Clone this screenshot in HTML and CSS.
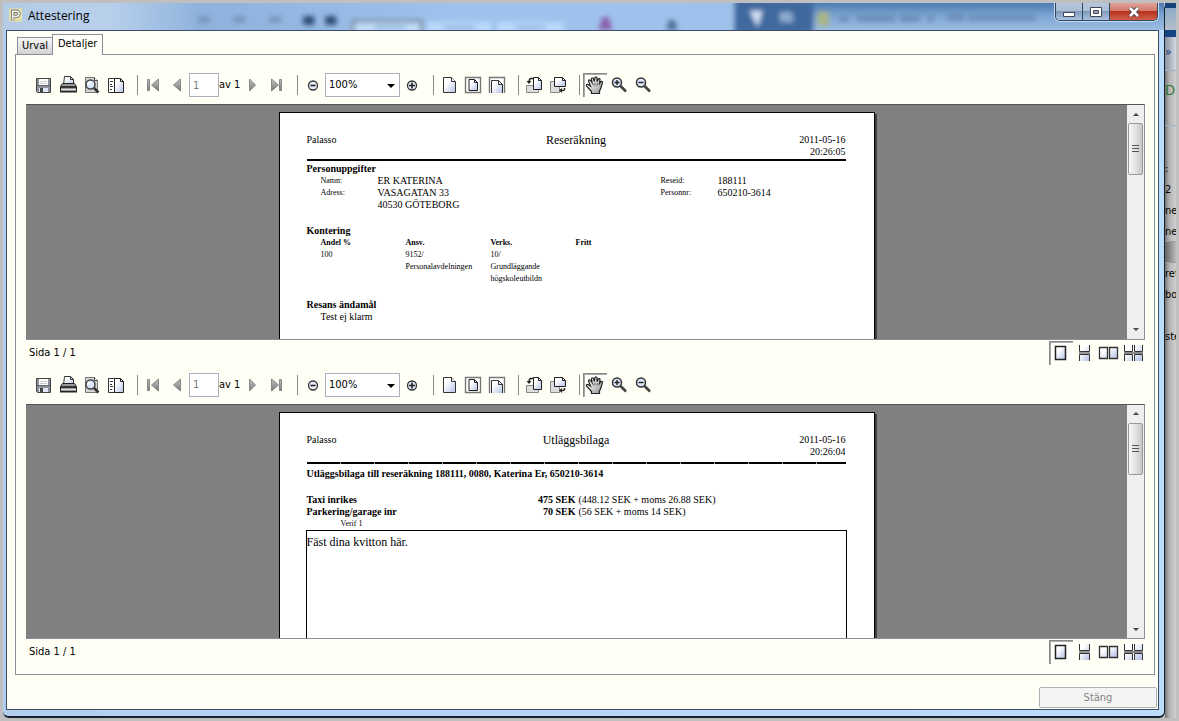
FILE: index.html
```
<!DOCTYPE html>
<html lang="sv">
<head>
<meta charset="utf-8">
<title>Attestering</title>
<link rel="stylesheet" href="styles.css">
</head>
<body>
<svg class="defs" aria-hidden="true">
  <defs>
    <linearGradient id="paper" x1="0" y1="0" x2="1" y2="1"><stop offset=".3" stop-color="#fff"/><stop offset="1" stop-color="#b4c2e8"/></linearGradient>
    <linearGradient id="steel" x1="0" y1="0" x2="0" y2="1"><stop offset="0" stop-color="#c4c4c4"/><stop offset="1" stop-color="#777"/></linearGradient>
    <linearGradient id="skin" x1="0" y1="0" x2="1" y2="1"><stop offset=".2" stop-color="#fff"/><stop offset="1" stop-color="#8a8a8a"/></linearGradient>
    <symbol id="i-save" viewBox="0 0 24 24"><path d="M4.500 5.500h14v14h-13l-1-1z" fill="#8d9199" stroke="#444"/><path d="M7 6h9v6H7z" fill="#fff"/><path d="M8 8.500h7M8 10.500h7" stroke="#ccc"/><path d="M5 12.500h13" stroke="#666"/><path d="M7 15h9v4H7z" fill="#dfe6fa"/><path d="M8 15h3v4H8z" fill="#444"/></symbol>
    <symbol id="i-print" viewBox="0 0 24 24"><path d="M7.500 12l1-8.500h6l3 3V12" fill="url(#paper)" stroke="#333"/><path d="M14.500 3.500v3h3" fill="none" stroke="#333"/><path d="M6.500 10.500h12l2 3v5h-16v-5z" fill="#999" stroke="#222"/><path d="M5 13h15v2H5z" fill="#333"/><path d="M5 16h15v1H5z" fill="#ddd"/><path d="M4 19h17" stroke="#222"/></symbol>
    <symbol id="i-preview" viewBox="0 0 24 24"><path d="M5.500 4.500h9l3 3v12h-12z" fill="#d4d4d4" stroke="#777"/><path d="M14.500 4.500v3h3" fill="#fff" stroke="#444"/><circle cx="10.500" cy="11.500" r="4.500" fill="#dceaff" stroke="#444" stroke-width="1.500"/><path d="M8 11.500a3 3 0 0 1 3-2.500" fill="none" stroke="#fff" stroke-width="1.500"/><path d="M14 15l4.500 4.500" stroke="#333" stroke-width="2.500"/></symbol>
    <symbol id="i-panel" viewBox="0 0 24 24"><path d="M4.500 5.500h6v14h-6z" fill="#fff" stroke="#333"/><path d="M6 8.500h3M6 11.500h2M6 13.500h3M6 16.500h2" stroke="#333"/><path d="M10.500 5.500h6l3 3v11h-9z" fill="url(#paper)" stroke="#222"/><path d="M16.500 5.500v3h3" fill="none" stroke="#222"/></symbol>
    <symbol id="i-first" viewBox="0 0 24 24"><path d="M6.500 6.500h2v11h-2zM17.500 6v12l-7-6z" fill="url(#steel)" stroke="#888"/></symbol>
    <symbol id="i-prev" viewBox="0 0 24 24"><path d="M15.500 6v12l-7-6z" fill="url(#steel)" stroke="#888"/></symbol>
    <symbol id="i-next" viewBox="0 0 24 24"><path d="M9.500 6v12l6-6z" fill="url(#steel)" stroke="#888"/></symbol>
    <symbol id="i-last" viewBox="0 0 24 24"><path d="M15.500 6.500h2v11h-2zM7.500 6v12l7-6z" fill="url(#steel)" stroke="#888"/></symbol>
    <symbol id="i-minus" viewBox="0 0 24 24"><circle cx="12" cy="12.500" r="4.500" fill="#e6ecf8" stroke="#333" stroke-width="1.300"/><path d="M9.500 12.500h5" stroke="#222" stroke-width="1.600"/></symbol>
    <symbol id="i-plus" viewBox="0 0 24 24"><circle cx="12" cy="12.500" r="4.500" fill="#e6ecf8" stroke="#333" stroke-width="1.300"/><path d="M9 12.500h6M12 9.500v6" stroke="#222" stroke-width="1.600"/></symbol>
    <symbol id="i-page" viewBox="0 0 24 24"><path d="M6.500 4.500h8l4 4v11h-12z" fill="url(#paper)" stroke="#333"/><path d="M14.500 4.500v4h4" fill="#fff" stroke="#333"/></symbol>
    <symbol id="i-fit" viewBox="0 0 24 24"><path d="M4.500 4.500h15v15h-15z" fill="#fff" stroke="#777" stroke-width="1.400"/><path d="M8 6.500h5.500l3 3v8H8z" fill="url(#paper)" stroke="#222"/><path d="M13.500 6.500v3h3" fill="none" stroke="#222"/></symbol>
    <symbol id="i-width" viewBox="0 0 24 24"><path d="M4.500 20v-15.500h15V20" fill="#fff" stroke="#777" stroke-width="1.400"/><path d="M6.500 20V7.500h7l4 4V20" fill="url(#paper)" stroke="#333"/><path d="M13.500 7.500v4h4" fill="none" stroke="#333"/></symbol>
    <symbol id="i-rotl" viewBox="0 0 24 24"><path d="M4.500 12.500h12v7h-12z" fill="#ddd" stroke="#888"/><path d="M11.500 4.500h5l3 3v9h-8z" fill="url(#paper)" stroke="#222"/><path d="M16.500 4.500v3h3" fill="none" stroke="#222"/><path d="M11 5.500H9q-2 0-2 4" fill="none" stroke="#222" stroke-width="1.500"/><path d="M4.500 8h5L7 11z" fill="#222"/></symbol>
    <symbol id="i-rotr" viewBox="0 0 24 24"><path d="M4.500 8.500h9v11h-9z" fill="#ddd" stroke="#888"/><path d="M8.500 4.500h8l3 3v6h-11z" fill="url(#paper)" stroke="#222"/><path d="M16.500 4.500v3h3" fill="none" stroke="#222"/><path d="M18.500 15v1.500q0 1-2 1h-1" fill="none" stroke="#222" stroke-width="1.500"/><path d="M16 15v5l-3-2.500z" fill="#222"/></symbol>
    <symbol id="i-hand" viewBox="0 0 24 24"><path d="M8.500 20.500v-2l-5-5.500q-.5-2 1.500-1.500l2.500 1.500-2-5q.3-2 2-.5l1.500 2-.5-4q1-1.500 2 0l.8 3 .7-4q1.300-1.200 2 .3v4l1.500-3q1.500-.8 1.500.7l-.5 4 1.500-2q1.700-.6 1.500 1l-2 6.500-1 2v2.500z" fill="url(#skin)" stroke="#222" stroke-width="1.200"/><path d="M9.500 10l1 2.500M12 9.500v3M14.500 10l-.5 2.500" stroke="#444" stroke-width=".8"/></symbol>
    <symbol id="i-zin" viewBox="0 0 24 24"><circle cx="10" cy="9.500" r="4.500" fill="#dce6fa" stroke="#333" stroke-width="1.500"/><path d="M7.500 9.500h5M10 7v5" stroke="#222" stroke-width="1.400"/><path d="M13.500 13l5.500 5.500" stroke="#444" stroke-width="2.600"/></symbol>
    <symbol id="i-zout" viewBox="0 0 24 24"><circle cx="10" cy="9.500" r="4.500" fill="#dce6fa" stroke="#333" stroke-width="1.500"/><path d="M7.500 9.500h5" stroke="#222" stroke-width="1.400"/><path d="M13.500 13l5.500 5.500" stroke="#444" stroke-width="2.600"/></symbol>
    <symbol id="v-single" viewBox="0 0 24 24"><path d="M6.500 5.500h10v13h-10z" fill="url(#paper)" stroke="#222" stroke-width="1.500"/></symbol>
    <symbol id="v-cont" viewBox="0 0 24 24"><path d="M6.500 4h10v6.500h-10zM6.500 13.500h10V20h-10z" fill="url(#paper)"/><path d="M6 11h11v2H6z" fill="#999"/><path d="M6.500 4v6.500h10V4M6.500 20v-6.500h10V20" fill="none" stroke="#333"/></symbol>
    <symbol id="v-facing" viewBox="0 0 24 24"><path d="M2.500 6.500h8v11h-8zM12.500 6.500h8v11h-8z" fill="url(#paper)" stroke="#333" stroke-width="1.300"/></symbol>
    <symbol id="v-cfacing" viewBox="0 0 24 24"><path d="M3.500 4h8v6.500h-8zM13.500 4h8v6.500h-8zM3.500 13.500h8V20h-8zM13.500 13.500h8V20h-8z" fill="url(#paper)"/><path d="M3 11h19v2H3z" fill="#888"/><path d="M3.500 4v6.500h8V4M13.500 4v6.500h8V4M3.500 20v-6.500h8V20M13.500 20v-6.500h8V20" fill="none" stroke="#333"/></symbol>
  </defs>
</svg>

<div class="desktop">
  <div class="window">
    <header class="titlebar">
      <svg class="glass" viewBox="0 0 1160 27" preserveAspectRatio="none" aria-hidden="true">
        <defs>
          <filter id="soft" x="-20%" y="-50%" width="140%" height="200%"><feGaussianBlur stdDeviation="2.500"/></filter>
          <linearGradient id="sky" x1="0" x2="1" y1="0" y2="0"><stop offset="0" stop-color="#b4cbe8"/><stop offset=".09" stop-color="#b9d0ec"/><stop offset=".17" stop-color="#8fb2dc"/><stop offset=".4" stop-color="#9fc3ec"/><stop offset="1" stop-color="#9bc0e8"/></linearGradient>
          <linearGradient id="shade" x1="0" x2="0" y1="0" y2="1"><stop offset="0" stop-color="#3d6fa8"/><stop offset=".5" stop-color="#7fa7d3"/><stop offset="1" stop-color="#a3c3e6"/></linearGradient>
        </defs>
        <path d="M0 0h1160v27H0z" fill="url(#sky)"/>
        <g filter="url(#soft)">
          <path d="M800 -4h370v35H800z" fill="url(#shade)"/>
          <path d="M731 -4h79v35h-79z" fill="#40699f"/>
          <path d="M195 13h12v7h-12zM230 13h12v7h-12zM266 13h12v7h-12z" fill="#7896be"/>
          <path d="M300 13h11v9h-11zM322 13h11v9h-11z" fill="#2f4c74"/>
          <path d="M350 18h68v16h-68z" fill="#bedaf8" stroke="#7c8ba2" stroke-width="3"/>
          <path d="M424 19h64v12h-64zM494 19h66v12h-66z" fill="#b9d9fb"/>
          <path d="M372 23h30v3h-30zM440 23h32v3h-32zM512 23h30v3h-30z" fill="#86a9d2"/>
          <path d="M599 14h6l4 13H595z" fill="#8a5fae"/><path d="M665 17h6l3 10h-11z" fill="#4d6d97"/>
          <path d="M746 8h13l-5 16z" fill="#d0e2f6"/><path d="M776 9h12l2 10h-14z" fill="#8eacd0"/>
          <path d="M814 9h11v14h-11z" fill="#a9b681"/>
          <path d="M835 14h10v5h-10zM853 13h38v6h-38zM896 13h20v6h-20zM924 13h6v6h-6zM944 12h16v6h-16zM964 13h68v5h-68z" fill="#6a8bb5"/>
        </g>
      </svg>
      <svg class="app-icon" viewBox="0 0 14 14" aria-hidden="true"><path d="M0 0h14v14H0z" fill="#e6dfa4"/><path d="M4 13V3h4a2.500 2.500 0 0 1 0 5.500H5" fill="none" stroke="#777" stroke-width="3.600"/><path d="M4 13V3h4a2.500 2.500 0 0 1 0 5.500H5" fill="none" stroke="#f2f2ee" stroke-width="1.600"/></svg>
      <h1 class="title">Attestering</h1>
      <div class="caption-buttons">
        <button class="cap" aria-label="Minimera"><svg viewBox="0 0 14 12"><path d="M1.500 6.500h11v4h-11z" fill="#fff" stroke="#445"/></svg></button>
        <button class="cap" aria-label="Maximera"><svg viewBox="0 0 14 12"><path d="M1.500 1.500h11v9h-11z" fill="#fff" stroke="#445"/><path d="M4.500 4.500h5v3h-5z" fill="#9ab" stroke="#445"/></svg></button>
        <button class="cap close" aria-label="Stäng fönster"><svg viewBox="0 0 14 12"><path d="M3 2l8 8M11 2l-8 8" stroke="#445" stroke-width="4.500"/><path d="M3 2l8 8M11 2l-8 8" stroke="#fff" stroke-width="2.600"/></svg></button>
      </div>
    </header>

    <main class="client">
      <div class="tabs" role="tablist">
        <button class="tab" role="tab" aria-selected="false">Urval</button>
        <button class="tab active" role="tab" aria-selected="true">Detaljer</button>
      </div>
      <div class="panel" role="tabpanel">

        <section class="pane">
          <div class="toolbar">
            <button class="tool" aria-label="Spara"><svg><use href="#i-save"/></svg></button>
            <button class="tool" aria-label="Skriv ut"><svg><use href="#i-print"/></svg></button>
            <button class="tool" aria-label="Förhandsgranska"><svg><use href="#i-preview"/></svg></button>
            <button class="tool" aria-label="Sidopanel"><svg><use href="#i-panel"/></svg></button>
            <span class="sep"></span>
            <button class="tool" aria-label="Första sidan"><svg><use href="#i-first"/></svg></button>
            <button class="tool" aria-label="Föregående sida"><svg><use href="#i-prev"/></svg></button>
            <input class="page-no" id="page-a" type="text" value="1" disabled>
            <label class="page-of" for="page-a">av 1</label>
            <button class="tool" aria-label="Nästa sida"><svg><use href="#i-next"/></svg></button>
            <button class="tool" aria-label="Sista sidan"><svg><use href="#i-last"/></svg></button>
            <span class="sep"></span>
            <button class="tool" aria-label="Minska"><svg><use href="#i-minus"/></svg></button>
            <span class="zoom"><select aria-label="Zoom"><option>100%</option></select></span>
            <button class="tool" aria-label="Öka"><svg><use href="#i-plus"/></svg></button>
            <span class="sep"></span>
            <button class="tool" aria-label="Verklig storlek"><svg><use href="#i-page"/></svg></button>
            <button class="tool" aria-label="Anpassa sida"><svg><use href="#i-fit"/></svg></button>
            <button class="tool" aria-label="Anpassa bredd"><svg><use href="#i-width"/></svg></button>
            <span class="sep"></span>
            <button class="tool" aria-label="Rotera vänster"><svg><use href="#i-rotl"/></svg></button>
            <button class="tool" aria-label="Rotera höger"><svg><use href="#i-rotr"/></svg></button>
            <span class="sep"></span>
            <button class="tool pressed" aria-label="Panorera"><svg><use href="#i-hand"/></svg></button>
            <button class="tool" aria-label="Zooma in"><svg><use href="#i-zin"/></svg></button>
            <button class="tool" aria-label="Zooma ut"><svg><use href="#i-zout"/></svg></button>
          </div>
          <div class="viewport">
            <div class="canvas">
              <article class="sheet">
                <header class="sheet-head">
                  <p>Palasso</p><h2>Reseräkning</h2><p class="stamp">2011-05-16<br>20:26:05</p>
                </header>
                <hr class="rule">
                <h3>Personuppgifter</h3>
                <dl class="person">
                  <dt>Namn:</dt><dd>ER KATERINA</dd><dt>Reseid:</dt><dd>188111</dd>
                  <dt>Adress:</dt><dd>VASAGATAN 33<br>40530 GÖTEBORG</dd><dt>Personnr:</dt><dd>650210-3614</dd>
                </dl>
                <h3>Kontering</h3>
                <table class="coding">
                  <tr><th>Andel %</th><th>Ansv.</th><th>Verks.</th><th>Fritt</th></tr>
                  <tr><td>100</td><td>9152/<br>Personalavdelningen</td><td>10/<br>Grundläggande<br>högskoleutbildn</td><td></td></tr>
                </table>
                <h3>Resans ändamål</h3>
                <p class="indent">Test ej klarm</p>
              </article>
            </div>
            <div class="scrollbar" aria-hidden="true"><span class="arrow up"></span><span class="thumb"></span><span class="arrow down"></span></div>
          </div>
          <footer class="status">
            <span class="status-text">Sida 1 / 1</span>
            <button class="tool pressed" aria-label="En sida"><svg><use href="#v-single"/></svg></button>
            <button class="tool" aria-label="Löpande"><svg><use href="#v-cont"/></svg></button>
            <button class="tool" aria-label="Motstående"><svg><use href="#v-facing"/></svg></button>
            <button class="tool" aria-label="Löpande motstående"><svg><use href="#v-cfacing"/></svg></button>
          </footer>
        </section>

        <section class="pane">
          <div class="toolbar">
            <button class="tool" aria-label="Spara"><svg><use href="#i-save"/></svg></button>
            <button class="tool" aria-label="Skriv ut"><svg><use href="#i-print"/></svg></button>
            <button class="tool" aria-label="Förhandsgranska"><svg><use href="#i-preview"/></svg></button>
            <button class="tool" aria-label="Sidopanel"><svg><use href="#i-panel"/></svg></button>
            <span class="sep"></span>
            <button class="tool" aria-label="Första sidan"><svg><use href="#i-first"/></svg></button>
            <button class="tool" aria-label="Föregående sida"><svg><use href="#i-prev"/></svg></button>
            <input class="page-no" id="page-b" type="text" value="1" disabled>
            <label class="page-of" for="page-b">av 1</label>
            <button class="tool" aria-label="Nästa sida"><svg><use href="#i-next"/></svg></button>
            <button class="tool" aria-label="Sista sidan"><svg><use href="#i-last"/></svg></button>
            <span class="sep"></span>
            <button class="tool" aria-label="Minska"><svg><use href="#i-minus"/></svg></button>
            <span class="zoom"><select aria-label="Zoom"><option>100%</option></select></span>
            <button class="tool" aria-label="Öka"><svg><use href="#i-plus"/></svg></button>
            <span class="sep"></span>
            <button class="tool" aria-label="Verklig storlek"><svg><use href="#i-page"/></svg></button>
            <button class="tool" aria-label="Anpassa sida"><svg><use href="#i-fit"/></svg></button>
            <button class="tool" aria-label="Anpassa bredd"><svg><use href="#i-width"/></svg></button>
            <span class="sep"></span>
            <button class="tool" aria-label="Rotera vänster"><svg><use href="#i-rotl"/></svg></button>
            <button class="tool" aria-label="Rotera höger"><svg><use href="#i-rotr"/></svg></button>
            <span class="sep"></span>
            <button class="tool pressed" aria-label="Panorera"><svg><use href="#i-hand"/></svg></button>
            <button class="tool" aria-label="Zooma in"><svg><use href="#i-zin"/></svg></button>
            <button class="tool" aria-label="Zooma ut"><svg><use href="#i-zout"/></svg></button>
          </div>
          <div class="viewport">
            <div class="canvas">
              <article class="sheet">
                <header class="sheet-head">
                  <p>Palasso</p><h2>Utläggsbilaga</h2><p class="stamp">2011-05-16<br>20:26:04</p>
                </header>
                <hr class="rule dashed">
                <h3>Utläggsbilaga till reseräkning 188111, 0080, Katerina Er, 650210-3614</h3>
                <table class="costs">
                  <tr><th>Taxi inrikes</th><td class="sum">475 SEK</td><td>(448.12 SEK + moms 26.88 SEK)</td></tr>
                  <tr><th>Parkering/garage inr</th><td class="sum">70 SEK</td><td>(56 SEK + moms 14 SEK)</td></tr>
                </table>
                <p class="verif">Verif 1</p>
                <div class="receipts">Fäst dina kvitton här.</div>
              </article>
            </div>
            <div class="scrollbar" aria-hidden="true"><span class="arrow up"></span><span class="thumb"></span><span class="arrow down"></span></div>
          </div>
          <footer class="status">
            <span class="status-text">Sida 1 / 1</span>
            <button class="tool pressed" aria-label="En sida"><svg><use href="#v-single"/></svg></button>
            <button class="tool" aria-label="Löpande"><svg><use href="#v-cont"/></svg></button>
            <button class="tool" aria-label="Motstående"><svg><use href="#v-facing"/></svg></button>
            <button class="tool" aria-label="Löpande motstående"><svg><use href="#v-cfacing"/></svg></button>
          </footer>
        </section>
      </div>
      <div class="actions"><button class="close-btn" disabled>Stäng</button></div>
    </main>
  </div>

  <aside class="behind">
    <div class="b-title"></div>
    <div class="b-menu"></div>
    <div class="b-bar"></div>
    <div class="b-tools">»</div>
    <div class="b-head">De</div>
    <div class="b-list"><span>:</span><span>2</span><span>ned</span><span>ned</span></div>
    <div class="b-band"></div>
    <div class="b-rest"><span>ret</span><span>bo</span><span class="r-last">ste</span></div>
  </aside>
</div>
</body>
</html>
```
FILE: styles.css
```
* { box-sizing: border-box; }
html, body, h1, h2, h3, p, dl, dd, hr { margin: 0; }
body {
  background: #bfbfbf;
  font: 11px/14px "DejaVu Sans Condensed", "DejaVu Sans", sans-serif;
  color: #000;
}
button, input, select { font: inherit; color: inherit; }
button { padding: 0; border: 0; background: none; }
.defs { position: absolute; width: 0; height: 0; }

.desktop {
  display: grid;
  grid-template-columns: 1fr 11px;
  min-height: 100vh;
  padding: 3px;
}

/* main window */
.window {
  display: flex;
  flex-direction: column;
  padding: 0 5px 6px 3px;
  background: linear-gradient(90deg, #b4cfee, #b7d6f7 50%, #bcdcfb);
  border-right: 1px solid #16202c;
  border-bottom: 2px solid #16202c;
  border-radius: 0 6px 6px 6px;
}
.titlebar {
  position: relative;
  display: flex;
  align-items: flex-start;
  gap: 6px;
  height: 27px;
  margin: 0 -5px 0 -3px;
  padding: 0 6px;
  overflow: hidden;
}
.glass { position: absolute; inset: 0; width: 100%; height: 100%; }
.app-icon { position: relative; width: 13px; height: 14px; margin-top: 5px; }
.title {
  position: relative;
  flex: 1;
  padding-top: 4px;
  font: 12px/18px "Open Sans", "Noto Sans", sans-serif;
}
.caption-buttons {
  position: relative;
  display: flex;
  border: 1px solid #31455e;
  border-top: 0;
  border-radius: 0 0 5px 5px;
  overflow: hidden;
  box-shadow: 0 0 0 1px #c5dcf4;
}
.cap {
  display: flex;
  align-items: center;
  justify-content: center;
  width: 27px;
  height: 17px;
  border-right: 1px solid #31455e;
  background: linear-gradient(#b9c9dc, #a9bdd4 45%, #7f9abb 50%, #a9c3e0);
}
.cap svg { width: 14px; height: 12px; }
.close {
  width: 47px;
  border-right: 0;
  background: linear-gradient(#dfa29a, #d27a6c 45%, #b9321d 50%, #d0604a);
}

.client {
  flex: 1;
  display: flex;
  flex-direction: column;
  padding: 3px 3px 0 8px;
  background: #fffff5;
  border: 1px solid #3d4d63;
}
.tabs { display: flex; align-items: flex-end; padding-left: 2px; }
.tab {
  height: 17px;
  padding: 0 4px;
  border: 1px solid #8a8d9c;
  border-bottom: 0;
  background: linear-gradient(#f6f6f6, #d2d2d2);
}
.tab.active {
  z-index: 1;
  height: 21px;
  margin: 0 0 -1px -1px;
  padding: 0 5px 2px;
  background: #fffff8;
}
.panel {
  flex: 1;
  display: flex;
  flex-direction: column;
  padding: 11px 9px 9px 10px;
  border: 1px solid #8a8d9c;
}
.pane { flex: 1; display: flex; flex-direction: column; min-height: 0; }

.toolbar {
  display: flex;
  align-items: center;
  height: 38px;
  padding-left: 6px;
}
.tool { width: 24px; height: 24px; }
.tool svg { display: block; width: 24px; height: 24px; }
.tool.pressed {
  background: #fffffa;
  box-shadow: inset 1px 1px 0 #888, inset 2px 2px 0 #aaa, inset -1px -1px 0 #fff;
}
.sep { width: 1px; height: 20px; margin: 0 3px 0 9px; background: #888; }
.page-no {
  width: 30px;
  height: 24px;
  padding: 0 3px;
  border: 1px solid #aaafbc;
  background: #fff;
  color: #777;
}
.page-of { width: 21px; white-space: nowrap; }
.zoom { position: relative; }
.zoom select {
  display: block;
  width: 75px;
  height: 24px;
  padding: 0 3px;
  appearance: none;
  border: 1px solid #aaafbc;
  border-radius: 0;
  background: #fff;
}
.zoom::after {
  content: "";
  position: absolute;
  right: 5px;
  top: 11px;
  border: 4px solid transparent;
  border-top-color: #000;
  border-bottom: 0;
  pointer-events: none;
}

.viewport {
  flex: 1;
  display: flex;
  min-height: 0;
  border: 1px solid #8a8d9c;
  border-top-color: #555;
  border-left: 0;
  background: #808080;
}
.canvas {
  flex: 1;
  display: flex;
  justify-content: center;
  padding-top: 7px;
  overflow: hidden;
  height: 0;
  min-height: 100%;
}
.scrollbar {
  display: flex;
  flex-direction: column;
  align-items: center;
  width: 17px;
  background: #efefef;
}
.arrow { display: flex; width: 17px; height: 18px; align-items: center; justify-content: center; }
.arrow::before { content: ""; border: 3px solid transparent; }
.up::before { border-bottom-color: #444; border-top: 0; }
.down::before { border-top-color: #444; border-bottom: 0; }
.down { margin-top: auto; }
.thumb {
  width: 15px;
  height: 52px;
  border: 1px solid #999;
  border-radius: 2px;
  background:
    repeating-linear-gradient(#555 0 1px, transparent 1px 3px) center / 7px 8px no-repeat,
    linear-gradient(90deg, #f8f8f8, #e2e2e2 50%, #c6c6c6);
}

.status { display: flex; align-items: center; height: 26px; padding-left: 3px; }
.status-text { flex: 1; }

/* report sheets */
.sheet {
  width: 596px;
  height: 842px;
  padding: 21px 28px 0 27px;
  border: 1px solid #000;
  background: #fff;
  box-shadow: 2px 2px 0 #404040;
  font: 10px/12px "Liberation Serif", "Times New Roman", serif;
}
.sheet h2 { font-size: 12px; font-weight: 400; }
.sheet h3 { font-size: 10px; }
.sheet-head { display: grid; grid-template-columns: 1fr auto 1fr; }
.stamp { text-align: right; }
.rule { height: 2px; margin: 1px 0 2px; border: 0; background: #000; }
.dashed {
  margin: 4px 0;
  background: repeating-linear-gradient(90deg, #000 0 33px, #999 33px 34px);
}
.person {
  display: grid;
  grid-template-columns: 57px 283px 57px 1fr;
  padding-left: 14px;
  margin-bottom: 14px;
}
.person dt { font-size: 8px; }
.coding { margin: 0 0 14px 14px; border-spacing: 0; font-size: 8px; }
.sheet th, .sheet td { padding: 0; text-align: left; vertical-align: top; }
.coding th, .coding td { width: 85px; }
.indent { padding-left: 14px; }
.costs { margin-top: 14px; border-spacing: 0; }
.costs th { width: 180px; }
.costs .sum { width: 92px; padding-right: 3px; font-weight: 700; text-align: right; }
.verif { padding-left: 34px; font-size: 8px; }
.receipts {
  height: 500px;
  margin: 0 -1px;
  padding-top: 4px;
  border: 1px solid #000;
  font-size: 12px;
  line-height: 14px;
}

.actions { display: flex; justify-content: flex-end; padding: 12px 0 1px; margin-right: -2px; }
.close-btn {
  width: 118px;
  height: 21px;
  border: 1px solid #adb2b5;
  border-radius: 2px;
  background: #f4f4f4;
  color: #838383;
}

/* strip of the window underneath */
.behind {
  display: flex;
  flex-direction: column;
  overflow: hidden;
  background: linear-gradient(90deg, #777, #b4b4b4 40%, #cfcfcf);
  line-height: 21px;
}
.b-title { height: 5px; background: #154078; }
.b-menu { height: 22px; background: linear-gradient(#8fa9c8, #b4bfcc); }
.b-bar { height: 7px; background: #164483; }
.b-tools { height: 34px; padding-top: 5px; border-bottom: 1px solid #9fb0c4; background: linear-gradient(90deg, #8b93a0, #d3d8e2); color: #1d3b78; font-size: 12px; }
.b-head { height: 55px; padding-top: 8px; border-bottom: 1px solid #9fb3c8; color: #27752c; font: 14px/22px "Open Sans", sans-serif; }
.b-list { display: flex; flex-direction: column; height: 116px; padding-top: 32px; border-bottom: 1px solid #999; }
.b-band { height: 21px; border-bottom: 1px solid #999; background: linear-gradient(90deg, #666, #bbb); }
.b-rest { display: flex; flex: 1; flex-direction: column; }
.r-last { padding-top: 21px; }
```
